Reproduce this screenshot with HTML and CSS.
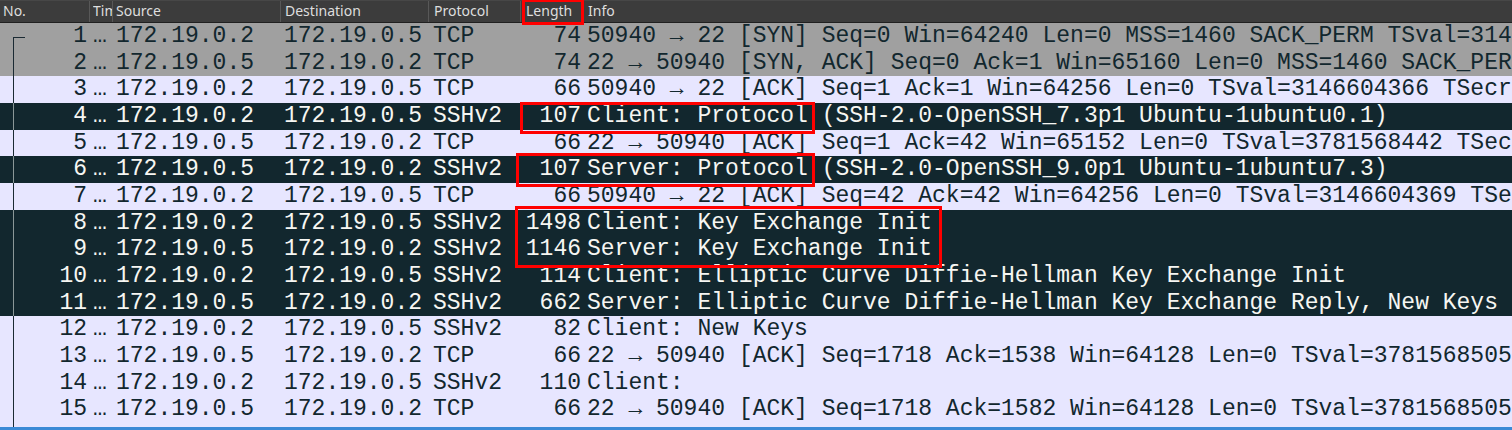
FILE: index.html
```html
<!DOCTYPE html>
<html>
<head>
<meta charset="utf-8">
<link rel="stylesheet" href="styles.css">
</head>
<body>
<div class="pane">
  <div class="head">
    <div class="h c-no">No.</div>
    <div class="h c-time"><span class="clip">Time</span></div>
    <div class="h c-src">Source</div>
    <div class="h c-dst">Destination</div>
    <div class="h c-proto">Protocol</div>
    <div class="h c-len">Length</div>
    <div class="h c-info">Info</div>
  </div>
  <div class="rows">
    <div class="row syn first"><div class="c-no">1</div><div class="c-time">…</div><div class="c-src">172.19.0.2</div><div class="c-dst">172.19.0.5</div><div class="c-proto">TCP</div><div class="c-len">74</div><div class="c-info">50940 → 22 [SYN] Seq=0 Win=64240 Len=0 MSS=1460 SACK_PERM TSval=3146604366 TSecr=0 WS=128</div></div>
    <div class="row syn"><div class="c-no">2</div><div class="c-time">…</div><div class="c-src">172.19.0.5</div><div class="c-dst">172.19.0.2</div><div class="c-proto">TCP</div><div class="c-len">74</div><div class="c-info">22 → 50940 [SYN, ACK] Seq=0 Ack=1 Win=65160 Len=0 MSS=1460 SACK_PERM TSval=3781568442</div></div>
    <div class="row lt"><div class="c-no">3</div><div class="c-time">…</div><div class="c-src">172.19.0.2</div><div class="c-dst">172.19.0.5</div><div class="c-proto">TCP</div><div class="c-len">66</div><div class="c-info">50940 → 22 [ACK] Seq=1 Ack=1 Win=64256 Len=0 TSval=3146604366 TSecr=3781568442</div></div>
    <div class="row dk"><div class="c-no">4</div><div class="c-time">…</div><div class="c-src">172.19.0.2</div><div class="c-dst">172.19.0.5</div><div class="c-proto">SSHv2</div><div class="c-len">107</div><div class="c-info">Client: Protocol (SSH-2.0-OpenSSH_7.3p1 Ubuntu-1ubuntu0.1)</div></div>
    <div class="row lt"><div class="c-no">5</div><div class="c-time">…</div><div class="c-src">172.19.0.5</div><div class="c-dst">172.19.0.2</div><div class="c-proto">TCP</div><div class="c-len">66</div><div class="c-info">22 → 50940 [ACK] Seq=1 Ack=42 Win=65152 Len=0 TSval=3781568442 TSecr=3146604366</div></div>
    <div class="row dk"><div class="c-no">6</div><div class="c-time">…</div><div class="c-src">172.19.0.5</div><div class="c-dst">172.19.0.2</div><div class="c-proto">SSHv2</div><div class="c-len">107</div><div class="c-info">Server: Protocol (SSH-2.0-OpenSSH_9.0p1 Ubuntu-1ubuntu7.3)</div></div>
    <div class="row lt"><div class="c-no">7</div><div class="c-time">…</div><div class="c-src">172.19.0.2</div><div class="c-dst">172.19.0.5</div><div class="c-proto">TCP</div><div class="c-len">66</div><div class="c-info">50940 → 22 [ACK] Seq=42 Ack=42 Win=64256 Len=0 TSval=3146604369 TSecr=3781568442</div></div>
    <div class="row dk"><div class="c-no">8</div><div class="c-time">…</div><div class="c-src">172.19.0.2</div><div class="c-dst">172.19.0.5</div><div class="c-proto">SSHv2</div><div class="c-len">1498</div><div class="c-info">Client: Key Exchange Init</div></div>
    <div class="row dk"><div class="c-no">9</div><div class="c-time">…</div><div class="c-src">172.19.0.5</div><div class="c-dst">172.19.0.2</div><div class="c-proto">SSHv2</div><div class="c-len">1146</div><div class="c-info">Server: Key Exchange Init</div></div>
    <div class="row dk"><div class="c-no">10</div><div class="c-time">…</div><div class="c-src">172.19.0.2</div><div class="c-dst">172.19.0.5</div><div class="c-proto">SSHv2</div><div class="c-len">114</div><div class="c-info">Client: Elliptic Curve Diffie-Hellman Key Exchange Init</div></div>
    <div class="row dk"><div class="c-no">11</div><div class="c-time">…</div><div class="c-src">172.19.0.5</div><div class="c-dst">172.19.0.2</div><div class="c-proto">SSHv2</div><div class="c-len">662</div><div class="c-info">Server: Elliptic Curve Diffie-Hellman Key Exchange Reply, New Keys</div></div>
    <div class="row lt"><div class="c-no">12</div><div class="c-time">…</div><div class="c-src">172.19.0.2</div><div class="c-dst">172.19.0.5</div><div class="c-proto">SSHv2</div><div class="c-len">82</div><div class="c-info">Client: New Keys</div></div>
    <div class="row lt"><div class="c-no">13</div><div class="c-time">…</div><div class="c-src">172.19.0.5</div><div class="c-dst">172.19.0.2</div><div class="c-proto">TCP</div><div class="c-len">66</div><div class="c-info">22 → 50940 [ACK] Seq=1718 Ack=1538 Win=64128 Len=0 TSval=3781568505 TSecr=3146604430</div></div>
    <div class="row lt"><div class="c-no">14</div><div class="c-time">…</div><div class="c-src">172.19.0.2</div><div class="c-dst">172.19.0.5</div><div class="c-proto">SSHv2</div><div class="c-len">110</div><div class="c-info">Client: </div></div>
    <div class="row lt"><div class="c-no">15</div><div class="c-time">…</div><div class="c-src">172.19.0.5</div><div class="c-dst">172.19.0.2</div><div class="c-proto">TCP</div><div class="c-len">66</div><div class="c-info">22 → 50940 [ACK] Seq=1718 Ack=1582 Win=64128 Len=0 TSval=3781568505 TSecr=3146604431</div></div>
  </div>
  <div class="filler"></div>
  <div class="bottom-bar"></div>

  <div class="mark mark-len"></div>
  <div class="mark mark-r4"></div>
  <div class="mark mark-r6"></div>
  <div class="mark mark-r89"></div>
</div>
</body>
</html>
```

FILE: styles.css
```css
* { box-sizing: border-box; }
html, body { margin: 0; padding: 0; }
body {
  width: 1512px;
  height: 430px;
  overflow: hidden;
  background: #e7e6ff;
}
.pane {
  position: relative;
  width: 1512px;
  height: 430px;
  display: flex;
  flex-direction: column;
  overflow: hidden;
}
.head {
  display: flex;
  height: 23px;
  flex: none;
  background: #3c3c3c;
  border-top: 1px solid #474747;
  border-bottom: 1px solid #202020;
  font-family: "Noto Sans", "Liberation Sans", sans-serif;
  font-size: 14px;
  color: #dedede;
}
.h {
  height: 21px;
  line-height: 20px;
  padding-left: 4px;
  white-space: nowrap;
  overflow: hidden;
  border-right: 1px solid #585858;
}
.h .clip {
  display: block;
  width: 19px;
  overflow: hidden;
}
.h.c-no { padding-left: 3px; text-align: left; }
.h.c-time { padding-left: 3px; }
.h.c-src { padding-left: 3px; }
.h.c-proto { padding-left: 5px; }
.h.c-len { padding-left: 5px; text-align: left; }
.h.c-info { padding-left: 5px; border-right: none; }

.c-no { width: 90px; flex: none; }
.c-time { width: 23px; flex: none; }
.c-src { width: 168px; flex: none; }
.c-dst { width: 148px; flex: none; }
.c-proto { width: 92px; flex: none; }
.c-len { width: 62px; flex: none; }
.c-info { flex: 1; min-width: 0; }

.rows { flex: none; }
.row {
  display: flex;
  height: 26.667px;
  line-height: 26.667px;
  font-family: "Liberation Mono", "DejaVu Sans Mono", monospace;
  font-size: 23px;
  white-space: nowrap;
  overflow: hidden;
  --tree: #1b2a33;
}
.row > div { overflow: hidden; }
.row .c-no {
  text-align: right;
  padding-right: 3px;
  background: linear-gradient(var(--tree), var(--tree)) 13px 0 / 1px 100% no-repeat;
}
.row .c-time { padding-left: 3px; }
.row .c-src { padding-left: 3px; }
.row .c-dst { padding-left: 3px; }
.row .c-proto { padding-left: 4px; }
.row .c-len { text-align: right; padding-right: 2px; }
.row .c-info { padding-left: 4px; }

.syn { background: #a0a0a0; color: #12272e; }
.lt { background: #e7e6ff; color: #12272e; }
.dk { background: #12272e; color: #f6f6f2; --tree: #8a9797; }

.row.first .c-no {
  background:
    linear-gradient(var(--tree), var(--tree)) 13px 14px / 1px calc(100% - 14px) no-repeat,
    linear-gradient(var(--tree), var(--tree)) 13px 14px / 12px 1px no-repeat;
}

.filler {
  flex: 1;
  background: #e7e6ff linear-gradient(#1b2a33, #1b2a33) 13px 0 / 1px 100% no-repeat;
}
.bottom-bar {
  height: 3px;
  flex: none;
  background: #3b8ad6;
}

.mark {
  position: absolute;
  border: 3px solid #ff0000;
  pointer-events: none;
}
.mark-len { left: 522px; top: -1px; width: 62px; height: 26px; }
.mark-r4 { left: 520px; top: 102px; width: 295px; height: 32px; }
.mark-r6 { left: 516px; top: 153px; width: 299px; height: 34px; }
.mark-r89 { left: 515px; top: 206px; width: 427px; height: 62px; }
```
